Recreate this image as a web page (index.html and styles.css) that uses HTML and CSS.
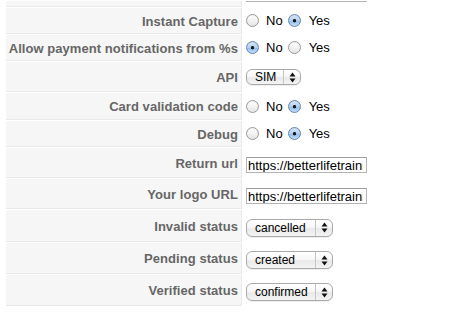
FILE: index.html
```html
<!DOCTYPE html>
<html>
<head>
<meta charset="utf-8">
<link rel="stylesheet" href="styles.css">
</head>
<body>
<table class="paramlist">
  <tr class="row-top">
    <td class="key"></td>
    <td class="val"><div class="input-stub"></div></td>
  </tr>
  <tr class="row-radio">
    <td class="key">Instant Capture</td>
    <td class="val"><span class="radios"><input type="radio" class="rd" name="ic"><label>No</label><input type="radio" class="rd" name="ic" checked><label>Yes</label></span></td>
  </tr>
  <tr class="row-radio">
    <td class="key">Allow payment notifications from %s</td>
    <td class="val"><span class="radios"><input type="radio" class="rd" name="ap" checked><label>No</label><input type="radio" class="rd" name="ap"><label>Yes</label></span></td>
  </tr>
  <tr class="row-api">
    <td class="key">API</td>
    <td class="val"><span class="sel sel-api"><span class="sel-text">SIM</span><span class="sel-arr"><svg width="7" height="11" viewBox="0 0 7 11"><path d="M3.5 0.5 L6.5 4.5 L0.5 4.5 Z M3.5 10.5 L6.5 6.5 L0.5 6.5 Z" fill="#111"/></svg></span></span></td>
  </tr>
  <tr class="row-radio2">
    <td class="key">Card validation code</td>
    <td class="val"><span class="radios"><input type="radio" class="rd" name="cv"><label>No</label><input type="radio" class="rd" name="cv" checked><label>Yes</label></span></td>
  </tr>
  <tr class="row-radio">
    <td class="key">Debug</td>
    <td class="val"><span class="radios"><input type="radio" class="rd" name="db"><label>No</label><input type="radio" class="rd" name="db" checked><label>Yes</label></span></td>
  </tr>
  <tr class="row-input">
    <td class="key">Return url</td>
    <td class="val"><input type="text" class="txt" value="https://betterlifetraining.com/index.php"></td>
  </tr>
  <tr class="row-input">
    <td class="key">Your logo URL</td>
    <td class="val"><input type="text" class="txt" value="https://betterlifetraining.com/images/logo.png"></td>
  </tr>
  <tr class="row-sel-a">
    <td class="key">Invalid status</td>
    <td class="val"><span class="sel sel-status"><span class="sel-text">cancelled</span><span class="sel-arr"><svg width="7" height="11" viewBox="0 0 7 11"><path d="M3.5 0.5 L6.5 4.5 L0.5 4.5 Z M3.5 10.5 L6.5 6.5 L0.5 6.5 Z" fill="#111"/></svg></span></span></td>
  </tr>
  <tr class="row-sel-b">
    <td class="key">Pending status</td>
    <td class="val"><span class="sel sel-status"><span class="sel-text">created</span><span class="sel-arr"><svg width="7" height="11" viewBox="0 0 7 11"><path d="M3.5 0.5 L6.5 4.5 L0.5 4.5 Z M3.5 10.5 L6.5 6.5 L0.5 6.5 Z" fill="#111"/></svg></span></span></td>
  </tr>
  <tr class="row-sel-b">
    <td class="key">Verified status</td>
    <td class="val"><span class="sel sel-status"><span class="sel-text">confirmed</span><span class="sel-arr"><svg width="7" height="11" viewBox="0 0 7 11"><path d="M3.5 0.5 L6.5 4.5 L0.5 4.5 Z M3.5 10.5 L6.5 6.5 L0.5 6.5 Z" fill="#111"/></svg></span></span></td>
  </tr>
</table>
</body>
</html>
```
FILE: styles.css
```css
html, body {
  margin: 0;
  padding: 0;
  background: #fff;
}
body {
  padding-left: 5px;
  font-family: "Liberation Sans", Arial, Helvetica, sans-serif;
  font-size: 13px;
  color: #000;
}
.paramlist {
  border-collapse: separate;
  border-spacing: 1px;
  width: 444px;
}
.paramlist td {
  padding: 0;
  vertical-align: middle;
}
.key {
  width: 232px;
  box-sizing: content-box;
  padding: 1px 3px 0 0 !important;
  background: #f6f6f6;
  border-bottom: 1px solid #e9e9e9;
  border-right: 1px solid #e9e9e9;
  color: #666;
  font-weight: bold;
  text-align: right;
  white-space: nowrap;
  line-height: 15px;
  letter-spacing: 0.05px;
}
.val {
  padding-left: 3px !important;
  white-space: nowrap;
}
.row-top .key { height: 4px; }
.row-radio .key { height: 24px; }
.row-radio2 .key { height: 25px; }
.row-api .key { height: 28px; }
.row-input .key { height: 28px; }
.row-sel-a .key { height: 30px; }
.row-sel-b .key { height: 29px; }

.row-top .val { vertical-align: top; }
.input-stub {
  width: 119px;
  height: 0;
  border: 1px solid #b4b4b4;
  border-top: none;
}

.radios {
  display: inline-flex;
  align-items: center;
  height: 15px;
  line-height: 15px;
  margin-top: 1px;
}
.rd {
  appearance: none;
  -webkit-appearance: none;
  width: 13px;
  height: 13px;
  margin: 0 7px 0 0;
  border-radius: 50%;
  border: 1px solid #9a9a9a;
  box-sizing: border-box;
  background: linear-gradient(#ffffff, #f0f0f0 60%, #e4e4e4);
  box-shadow: inset 0 1px 1px rgba(0,0,0,0.06);
}
.rd:checked {
  border-color: #6486b0;
  background:
    radial-gradient(circle at 50% 52%, #1a1a1a 0, #1a1a1a 1.3px, rgba(0,0,0,0) 2.1px),
    linear-gradient(#dbe9f9, #b4d0f0 50%, #8dbbec 51%, #c3ddf7);
}
.radios label {
  margin-right: 5px;
  color: #000;
}
.radios label + .rd {
  margin-right: 8px;
}

.txt {
  display: block;
  margin: 4px 0 0 0;
  width: 121px;
  height: 16px;
  box-sizing: border-box;
  border: 1px solid #b4b4b4;
  border-top-color: #9c9c9c;
  padding: 0 3px 0 1px;
  font-family: "Liberation Sans", Arial, Helvetica, sans-serif;
  font-size: 13px;
  line-height: 14px;
  color: #000;
  background: #fff;
  outline: none;
}

.sel {
  display: inline-flex;
  align-items: stretch;
  box-sizing: border-box;
  border: 1px solid #a9a9a9;
  border-radius: 6px;
  background: linear-gradient(#ffffff, #f7f7f7 45%, #e9e9e9 55%, #f4f4f4);
  box-shadow: 0 1px 0 rgba(0,0,0,0.06);
  font-size: 12px;
  color: #000;
  vertical-align: middle;
}
.sel-api {
  width: 55px;
  height: 16px;
}
.sel-status {
  width: 87px;
  height: 18px;
  margin-top: 3px;
}
.sel-text {
  flex: 1;
  padding-left: 8px;
  display: flex;
  align-items: center;
  line-height: 14px;
}
.sel-arr {
  width: 16px;
  border-left: 1px solid #c4c4c4;
  display: flex;
  align-items: center;
  justify-content: center;
}
.sel-arr svg {
  display: block;
}
```
